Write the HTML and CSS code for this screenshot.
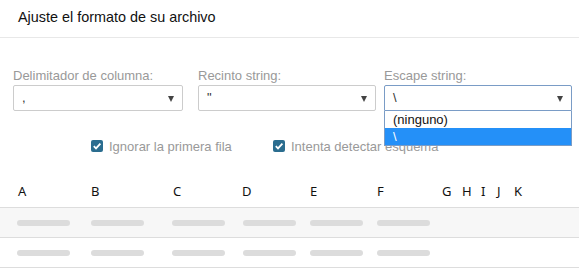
FILE: index.html
```html
<!DOCTYPE html>
<html lang="es">
<head>
<meta charset="utf-8">
<link rel="stylesheet" href="styles.css">
</head>
<body>
<div class="page">
  <header class="header">Ajuste el formato de su archivo</header>
  <section class="form">
    <div class="fields">
      <div class="field f1">
        <label class="label">Delimitador de columna:</label>
        <div class="select"><span class="value">,</span><span class="arrow"></span></div>
      </div>
      <div class="field f2">
        <label class="label">Recinto string:</label>
        <div class="select"><span class="value">"</span><span class="arrow"></span></div>
      </div>
      <div class="field f3">
        <label class="label">Escape string:</label>
        <div class="select open"><span class="value">\</span><span class="arrow"></span></div>
        <ul class="menu">
          <li class="opt">(ninguno)</li>
          <li class="opt active">\</li>
        </ul>
      </div>
    </div>
    <div class="checks">
      <label class="check c1"><span class="box"><svg viewBox="0 0 12 12" width="12" height="12"><path d="M2.8 6.2 L5 8.4 L9.4 3.6" fill="none" stroke="#fff" stroke-width="1.8"/></svg></span>Ignorar la primera fila</label>
      <label class="check c2"><span class="box"><svg viewBox="0 0 12 12" width="12" height="12"><path d="M2.8 6.2 L5 8.4 L9.4 3.6" fill="none" stroke="#fff" stroke-width="1.8"/></svg></span>Intenta detectar esquema</label>
    </div>
  </section>
  <div class="table">
    <div class="thead">
      <span class="th" style="width:73px">A</span>
      <span class="th" style="width:82px">B</span>
      <span class="th" style="width:69px">C</span>
      <span class="th" style="width:68px">D</span>
      <span class="th" style="width:67px">E</span>
      <span class="th" style="width:65px">F</span>
      <span class="th" style="width:20px">G</span>
      <span class="th" style="width:19px">H</span>
      <span class="th" style="width:16px">I</span>
      <span class="th" style="width:17px">J</span>
      <span class="th">K</span>
    </div>
    <div class="row alt">
      <span class="cell" style="width:74px"><i class="bar"></i></span>
      <span class="cell" style="width:81px"><i class="bar"></i></span>
      <span class="cell" style="width:71px"><i class="bar"></i></span>
      <span class="cell" style="width:67px"><i class="bar"></i></span>
      <span class="cell" style="width:67px"><i class="bar"></i></span>
      <span class="cell" style="width:65px"><i class="bar"></i></span>
    </div>
    <div class="row">
      <span class="cell" style="width:74px"><i class="bar"></i></span>
      <span class="cell" style="width:81px"><i class="bar"></i></span>
      <span class="cell" style="width:71px"><i class="bar"></i></span>
      <span class="cell" style="width:67px"><i class="bar"></i></span>
      <span class="cell" style="width:67px"><i class="bar"></i></span>
      <span class="cell" style="width:65px"><i class="bar"></i></span>
    </div>
  </div>
</div>
</body>
</html>
```
FILE: styles.css
```css
* { box-sizing: border-box; }
html, body { margin: 0; padding: 0; background: #fff; }
body { font-family: "Liberation Sans", Arial, sans-serif; color: #333; width: 579px; height: 268px; overflow: hidden; }
.page { width: 579px; }
.header {
  height: 38px;
  padding: 9px 0 0 18px;
  font-size: 14.4px;
  color: #111;
  border-bottom: 1px solid #e8e8e8;
}
.form { padding: 30px 0 0 13px; }
.fields { display: flex; }
.field { position: relative; display: flex; flex-direction: column; }
.f1 { width: 170px; margin-right: 15px; }
.f2 { width: 178px; margin-right: 8px; }
.f3 { width: 188px; }
.label { font-size: 13px; color: #999; line-height: 15px; height: 17px; }
.select {
  position: relative;
  height: 26px;
  border: 1px solid #ccc;
  border-radius: 2px;
  font-size: 13px;
  color: #333;
  padding: 4px 0 0 8px;
}
.select.open { border-color: #7a9cc6; border-radius: 2px 2px 0 0; }
.arrow {
  position: absolute;
  right: 8px; top: 10px;
  width: 0; height: 0;
  border-left: 3.5px solid transparent;
  border-right: 3.5px solid transparent;
  border-top: 6px solid #444;
}
.menu {
  position: absolute;
  top: 43px; left: 0; right: 0;
  margin: 0; padding: 0;
  list-style: none;
  background: #fff;
  border: 1px solid #7a9cc6;
  border-top: none;
  z-index: 2;
  font-size: 13px;
}
.opt { height: 17px; line-height: 17px; padding-left: 8px; color: #111; }
.opt.active { background: #2490f8; color: #fff; }
.checks { display: flex; padding: 28px 0 0 78px; height: 48px; }
.check { display: flex; align-items: center; font-size: 13px; color: #999; height: 14px; }
.c1 { width: 182px; }
.box {
  width: 12px; height: 12px;
  background: #2b6d8f;
  border-radius: 2px;
  margin-right: 6px;
  display: flex;
}
.thead { display: flex; height: 33px; padding: 0 0 0 18px; align-items: center; border-bottom: 1px solid #ddd; margin-top: 16px; }
.th { font-size: 13px; color: #111; font-family: "Noto Sans", "Liberation Sans", sans-serif; }
.row { display: flex; height: 30px; padding-left: 17px; align-items: center; border-bottom: 1px solid #ddd; }
.row.alt { background: #f7f7f7; }
.cell { display: flex; }
.bar { display: block; width: 53px; height: 6px; border-radius: 3px; background: #dcdcdc; }
```
